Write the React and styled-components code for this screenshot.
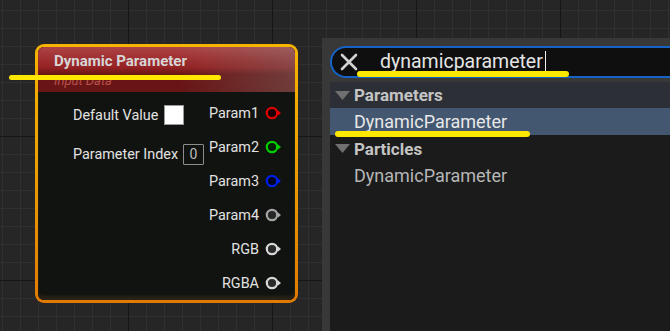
import React from "react";
import styled, { createGlobalStyle } from "styled-components";

const Global = createGlobalStyle`
  html, body { margin: 0; padding: 0; background: #262626; }
  * { box-sizing: border-box; }
`;

const Root = styled.div`
  position: relative;
  width: 670px;
  height: 331px;
  overflow: hidden;
  display: flex;
  align-items: flex-start;
  font-family: Roboto, "Noto Sans", sans-serif;
  background-color: #262626;
  background-image:
    linear-gradient(#161616 1px, transparent 1px),
    linear-gradient(90deg, #161616 1px, transparent 1px),
    linear-gradient(#303030 1px, transparent 1px),
    linear-gradient(90deg, #303030 1px, transparent 1px);
  background-size: 144px 144px, 144px 144px, 18px 18px, 18px 18px;
  background-position: 0 136px, 128px 0, 0 10px, 2px 0;
`;

const NodeFrame = styled.div`
  margin: 44px 0 0 35px;
  width: 263px;
  height: 259px;
  flex: none;
  padding: 3px;
  border-radius: 9px;
  background: linear-gradient(180deg, #f5b400 0%, #eda000 45%, #e07a00 100%);
`;

const NodeInner = styled.div`
  height: 100%;
  border-radius: 6px;
  overflow: hidden;
  display: flex;
  flex-direction: column;
  background: #111310;
  box-shadow: inset 0 -5px 3px -1px #2a2216, inset 0 0 0 1px #1a1a16;
`;

const Header = styled.div`
  height: 45px;
  flex: none;
  display: flex;
  flex-direction: column;
  padding: 5px 0 0 16px;
  background:
    linear-gradient(180deg, rgba(255, 255, 255, 0.12) 0%, rgba(255, 255, 255, 0.03) 30%, rgba(0, 0, 0, 0) 45%),
    linear-gradient(90deg, rgba(0, 0, 0, 0) 55%, rgba(120, 110, 105, 0.45) 100%),
    linear-gradient(180deg, #a22a2c 0%, #962224 45%, #6c1616 60%, #661414 100%);
`;

const Title = styled.div`
  font-weight: 700;
  font-size: 15px;
  line-height: 18px;
  color: #d6d6d6;
`;

const Subtitle = styled.div`
  margin-top: 3px;
  font-style: italic;
  font-size: 13px;
  line-height: 16px;
  color: #b8504c;
`;

const Body = styled.div`
  flex: 1;
  display: flex;
  justify-content: space-between;
  padding: 4px 13px 0 35px;
`;

const InColumn = styled.div`
  display: flex;
  flex-direction: column;
  gap: 5px;
  padding-top: 2px;
`;

const OutColumn = styled.div`
  display: flex;
  flex-direction: column;
  align-items: flex-end;
`;

const Row = styled.div`
  height: 34px;
  display: flex;
  align-items: center;
  gap: ${(p) => p.$gap || 6}px;
  font-size: 14.4px;
  color: #e2e2e2;
`;

const ColorSwatch = styled.div`
  width: 20px;
  height: 20px;
  background: #ffffff;
  border: 1px solid #9a9a9a;
`;

const NumberBox = styled.div`
  width: 21px;
  height: 21px;
  border: 1px solid #8c8c8c;
  border-radius: 1px;
  display: flex;
  align-items: center;
  justify-content: center;
  font-size: 14px;
  color: #bcbcbc;
`;

const PinSvg = styled.svg`
  display: block;
  width: 17px;
  height: 14px;
`;

function Pin({ color, fill }) {
  return (
    <PinSvg viewBox="0 0 17 14">
      <circle cx="7" cy="7" r="5.2" fill={fill} stroke={color} strokeWidth="2.2" />
      <polygon points="13,4.5 16,7 13,9.5" fill={color} />
    </PinSvg>
  );
}

const Panel = styled.div`
  margin: 38px 0 0 24px;
  flex: 1;
  height: 293px;
  background: #383838;
  padding: 8px 0 0 8px;
  display: flex;
  flex-direction: column;
  gap: 4px;
`;

const SearchBox = styled.div`
  height: 32px;
  flex: none;
  display: flex;
  align-items: center;
  background: #0f0f0f;
  border: 2px solid #1563c4;
  border-right: none;
  border-radius: 16px 0 0 16px;
  padding-left: 8px;
`;

const ClearIcon = styled.svg`
  width: 18px;
  height: 18px;
  flex: none;
`;

const SearchText = styled.div`
  margin-left: 22px;
  font-size: 19.5px;
  color: #e4e4e4;
  display: flex;
  align-items: center;
  line-height: 24px;
`;

const Caret = styled.span`
  display: inline-block;
  width: 1.5px;
  height: 23px;
  background: #f0f0f0;
  margin-left: 2px;
`;

const List = styled.div`
  flex: 1;
  background: #1b1b1b;
  display: flex;
  flex-direction: column;
`;

const Category = styled.div`
  height: ${(p) => p.$h}px;
  display: flex;
  align-items: center;
  gap: 4px;
  padding-left: 5px;
  background: ${(p) => p.$bg || "transparent"};
  font-weight: 700;
  font-size: 17px;
  color: #c4c4c4;
`;

const Triangle = styled.svg`
  width: 15px;
  height: 9px;
  flex: none;
`;

const Item = styled.div`
  height: 27px;
  display: flex;
  align-items: center;
  padding-left: 24px;
  font-size: 18px;
  background: ${(p) => (p.$selected ? "#435770" : "transparent")};
  color: ${(p) => (p.$selected ? "#e8e8e8" : "#b6b6b6")};
`;

const Highlight = styled.div`
  position: absolute;
  left: ${(p) => p.$x}px;
  top: ${(p) => p.$y}px;
  width: ${(p) => p.$w}px;
  height: ${(p) => p.$h || 5}px;
  border-radius: 3px;
  background: #ffe800;
`;

const outputs = [
  { name: "Param1", color: "#e00000", fill: "#1a0000" },
  { name: "Param2", color: "#00d000", fill: "#002000" },
  { name: "Param3", color: "#0020e8", fill: "#000420" },
  { name: "Param4", color: "#a4a4a4", fill: "#262626" },
  { name: "RGB", color: "#d8d8d8", fill: "#2a2a2a" },
  { name: "RGBA", color: "#d8d8d8", fill: "#2a2a2a" },
];

function DownTriangle() {
  return (
    <Triangle viewBox="0 0 15 9">
      <polygon points="0,0 15,0 7.5,9" fill="#707070" />
    </Triangle>
  );
}

export default function App() {
  return (
    <Root>
      <Global />
      <NodeFrame>
        <NodeInner>
          <Header>
            <Title>Dynamic Parameter</Title>
            <Subtitle>Input Data</Subtitle>
          </Header>
          <Body>
            <InColumn>
              <Row>
                Default Value
                <ColorSwatch />
              </Row>
              <Row $gap={5}>
                Parameter Index
                <NumberBox>0</NumberBox>
              </Row>
            </InColumn>
            <OutColumn>
              {outputs.map((o) => (
                <Row key={o.name} $gap={6}>
                  {o.name}
                  <Pin color={o.color} fill={o.fill} />
                </Row>
              ))}
            </OutColumn>
          </Body>
        </NodeInner>
      </NodeFrame>

      <Panel>
        <SearchBox>
          <ClearIcon viewBox="0 0 18 18">
            <path d="M2 2 L16 16 M16 2 L2 16" stroke="#d2d2d2" strokeWidth="2.6" strokeLinecap="round" />
          </ClearIcon>
          <SearchText>
            dynamicparameter
            <Caret />
          </SearchText>
        </SearchBox>
        <List>
          <Category $h={26} $bg="#2c3036">
            <DownTriangle />
            Parameters
          </Category>
          <Item $selected>DynamicParameter</Item>
          <Category $h={27}>
            <DownTriangle />
            Particles
          </Category>
          <Item>DynamicParameter</Item>
        </List>
      </Panel>

      <Highlight $x={9} $y={75} $w={212} $h={5} />
      <Highlight $x={357} $y={71} $w={212} $h={6} />
      <Highlight $x={335} $y={131} $w={195} $h={6} />
    </Root>
  );
}
